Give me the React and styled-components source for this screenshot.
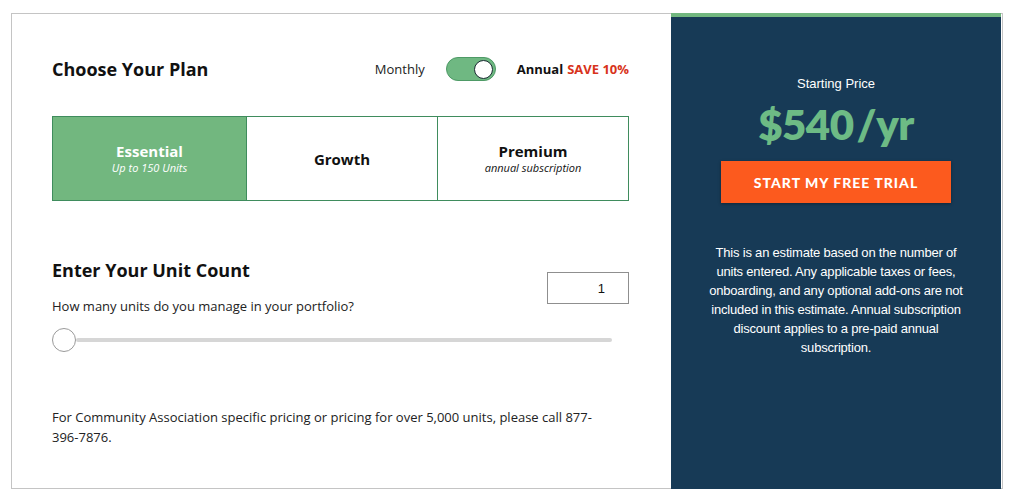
import React from 'react';
import styled, { createGlobalStyle } from 'styled-components';

const GlobalStyle = createGlobalStyle`
  html, body {
    margin: 0;
    padding: 0;
    background: #ffffff;
  }
  body {
    font-family: 'Open Sans', 'Liberation Sans', sans-serif;
    color: #1a1a1a;
  }
`;

const Frame = styled.div`
  margin: 13px 0 0 11px;
  width: 990px;
  height: 474px;
  border: 1px solid #c4c4c4;
  display: grid;
  grid-template-columns: 659px 330px 1fr;
`;

const Main = styled.div`
  padding: 43px 42px 0 40px;
  display: flex;
  flex-direction: column;
`;

const HeaderRow = styled.div`
  display: flex;
  align-items: center;
  justify-content: space-between;
  height: 24px;
`;

const Heading = styled.h2`
  margin: 0;
  font-size: 18px;
  line-height: 22px;
  font-weight: 700;
  color: #111;
`;

const Billing = styled.div`
  display: flex;
  align-items: center;
  font-size: 13px;
`;

const Monthly = styled.span`
  color: #222;
  margin-right: 21px;
`;

const Toggle = styled.div`
  width: 50px;
  height: 24px;
  border-radius: 12px;
  background: #6fb882;
  border: 1px solid #4e9a66;
  box-sizing: border-box;
  display: flex;
  align-items: center;
  justify-content: flex-end;
  padding-right: 2px;
  margin-right: 21px;
`;

const Knob = styled.div`
  width: 19px;
  height: 19px;
  border-radius: 50%;
  background: #fff;
  border: 1.5px solid #1b2b33;
  box-sizing: border-box;
`;

const Annual = styled.span`
  font-weight: 700;
  color: #111;
`;

const Save = styled.span`
  font-weight: 700;
  color: #d8331b;
  margin-left: 4px;
`;

const Plans = styled.div`
  margin-top: 35px;
  display: grid;
  grid-template-columns: 193px 191px 1fr;
  height: 85px;
  border: 1px solid #3f8c5d;
  box-sizing: border-box;
`;

const Plan = styled.div`
  display: flex;
  flex-direction: column;
  align-items: center;
  justify-content: center;
  background: ${p => (p.$active ? '#72b77f' : '#fff')};
  color: ${p => (p.$active ? '#fff' : '#111')};
  border-left: ${p => (p.$first ? 'none' : '1px solid #3f8c5d')};
`;

const PlanName = styled.div`
  font-size: 15px;
  font-weight: 700;
  line-height: 18px;
`;

const PlanNote = styled.div`
  font-size: 11px;
  font-style: italic;
  line-height: 14px;
  margin-top: 1px;
`;

const UnitRow = styled.div`
  margin-top: 58px;
  display: flex;
  justify-content: space-between;
  align-items: flex-start;
`;

const UnitText = styled.div`
  display: flex;
  flex-direction: column;
`;

const Question = styled.p`
  margin: 17px 0 0;
  font-size: 13px;
  color: #222;
  line-height: 16px;
`;

const CountInput = styled.div`
  margin-top: 13px;
  width: 82px;
  height: 32px;
  box-sizing: border-box;
  border: 1px solid #8f8f8f;
  font-family: 'Liberation Sans', Arial, sans-serif;
  font-size: 13px;
  display: flex;
  align-items: center;
  justify-content: flex-end;
  padding-right: 23px;
  color: #111;
`;

const Slider = styled.div`
  margin-top: 14px;
  width: 560px;
  height: 24px;
  display: flex;
  align-items: center;
`;

const Thumb = styled.div`
  width: 24px;
  height: 24px;
  border-radius: 50%;
  background: #fff;
  border: 1px solid #9a9a9a;
  box-sizing: border-box;
  flex-shrink: 0;
`;

const Track = styled.div`
  flex: 1;
  height: 4px;
  background: #d6d6d6;
  border-radius: 2px;
`;

const Footnote = styled.p`
  margin: 55px 0 0;
  font-size: 13px;
  line-height: 20px;
  color: #222;
  max-width: 556px;
`;

const Summary = styled.aside`
  margin: -1px 0;
  background: #173a56;
  border-top: 4px solid #72b77f;
  display: flex;
  flex-direction: column;
  align-items: center;
  padding-top: 57px;
  color: #fff;
  font-family: 'Liberation Sans', Arial, sans-serif;
`;

const StartLabel = styled.div`
  font-size: 13px;
  line-height: 18px;
  margin-top: 1px;
`;

const Price = styled.div`
  margin-top: 7px;
  font-family: 'Lato', 'Liberation Sans', sans-serif;
  font-size: 42px;
  font-weight: 800;
  color: #6dbb85;
  line-height: 48px;
  letter-spacing: -0.5px;
`;

const Thin = styled.span`
  margin-left: 3px;
`;

const TrialButton = styled.button`
  margin-top: 13px;
  width: 230px;
  height: 42px;
  background: #fc5a1e;
  color: #fff;
  border: none;
  font-family: 'Lato', 'Liberation Sans', sans-serif;
  font-size: 14px;
  font-weight: 900;
  letter-spacing: 1px;
  text-transform: uppercase;
  box-shadow: 0 1px 3px rgba(0, 0, 0, 0.35);
  cursor: pointer;
`;

const Disclaimer = styled.p`
  margin: 40px 0 0;
  padding: 0 32px;
  font-size: 13px;
  line-height: 19px;
  letter-spacing: -0.2px;
  text-align: center;
`;

export default function App() {
  return (
    <>
      <GlobalStyle />
      <Frame>
        <Main>
          <HeaderRow>
            <Heading>Choose Your Plan</Heading>
            <Billing>
              <Monthly>Monthly</Monthly>
              <Toggle>
                <Knob />
              </Toggle>
              <Annual>Annual</Annual>
              <Save>SAVE 10%</Save>
            </Billing>
          </HeaderRow>

          <Plans>
            <Plan $active $first>
              <PlanName>Essential</PlanName>
              <PlanNote>Up to 150 Units</PlanNote>
            </Plan>
            <Plan>
              <PlanName>Growth</PlanName>
            </Plan>
            <Plan>
              <PlanName>Premium</PlanName>
              <PlanNote>annual subscription</PlanNote>
            </Plan>
          </Plans>

          <UnitRow>
            <UnitText>
              <Heading>Enter Your Unit Count</Heading>
              <Question>How many units do you manage in your portfolio?</Question>
            </UnitText>
            <CountInput>1</CountInput>
          </UnitRow>

          <Slider>
            <Thumb />
            <Track />
          </Slider>

          <Footnote>
            For Community Association specific pricing or pricing for over 5,000 units, please call 877-396-7876.
          </Footnote>
        </Main>

        <Summary>
          <StartLabel>Starting Price</StartLabel>
          <Price>
            $540<Thin>/yr</Thin>
          </Price>
          <TrialButton>Start my free trial</TrialButton>
          <Disclaimer>
            This is an estimate based on the number of units entered. Any applicable taxes or fees,
            onboarding, and any optional add-ons are not included in this estimate. Annual subscription
            discount applies to a pre-paid annual subscription.
          </Disclaimer>
        </Summary>
        <div />
      </Frame>
    </>
  );
}
